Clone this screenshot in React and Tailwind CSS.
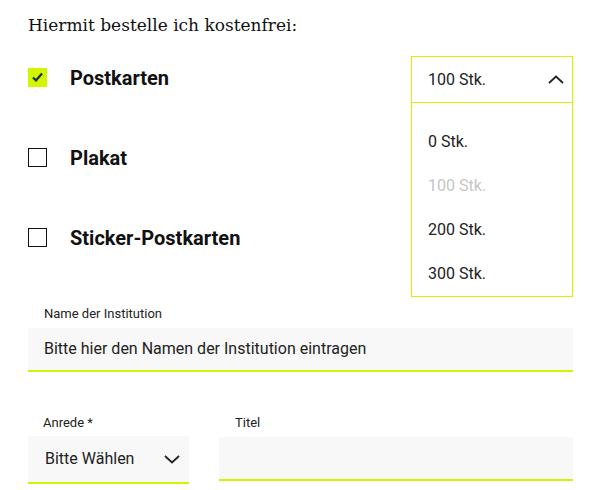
export default function App() {
  const lime = "border-[#d2f500]";
  return (
    <div className="w-[607px] min-h-[490px] bg-white pl-[28px] pr-[34px] pt-[13px] font-['Roboto',sans-serif] text-[#1c1c1c]">
      <h1 className="font-['DejaVu_Serif',serif] text-[17px] leading-[25px] font-normal text-[#111]">
        Hiermit bestelle ich kostenfrei:
      </h1>

      <div className="mt-[18px]">
        <div className="flex h-[80px] items-start justify-between">
          <label className="mt-[12px] flex h-[19px] items-center gap-[23px]">
            <span className="flex h-[19px] w-[19px] items-center justify-center bg-[#d2f500]">
              <svg width="19" height="19" viewBox="0 0 19 19">
                <polyline points="5,9.5 8,12.5 14,5.5" fill="none" stroke="#1b2a52" strokeWidth="2.2" />
              </svg>
            </span>
            <span className="pt-[1px] text-[20px] font-bold leading-[19px] text-[#111]">Postkarten</span>
          </label>

          <div className="relative w-[162px]">
            <div className={`flex h-[47px] items-center justify-between border ${lime} pl-[16px] pr-[8px] text-[16px] text-[#222]`}>
              <span>100 Stk.</span>
              <svg width="16" height="9" viewBox="0 0 16 9">
                <polyline points="1,8 8,1.5 15,8" fill="none" stroke="#222" strokeWidth="1.8" />
              </svg>
            </div>
            <ul className={`absolute left-0 top-full w-full border-x border-b ${lime} bg-white pt-[17px] pb-0 text-[16px]`}>
              <li className="flex h-[44px] items-center pl-[16px] text-[#222]">0 Stk.</li>
              <li className="flex h-[44px] items-center pl-[16px] text-[#c6c6c6]">100 Stk.</li>
              <li className="flex h-[44px] items-center pl-[16px] text-[#222]">200 Stk.</li>
              <li className="flex h-[44px] items-center pl-[16px] text-[#222]">300 Stk.</li>
            </ul>
          </div>
        </div>

        <div className="flex h-[80px] items-start">
          <label className="mt-[12px] flex h-[19px] items-center gap-[23px]">
            <span className="h-[19px] w-[19px] border border-[#111] bg-white" />
            <span className="pt-[1px] text-[20px] font-bold leading-[19px] text-[#111]">Plakat</span>
          </label>
        </div>

        <div className="flex h-[80px] items-start">
          <label className="mt-[12px] flex h-[19px] items-center gap-[23px]">
            <span className="h-[19px] w-[19px] border border-[#111] bg-white" />
            <span className="pt-[1px] text-[20px] font-bold leading-[19px] text-[#111]">Sticker-Postkarten</span>
          </label>
        </div>
      </div>

      <div className="pt-[10px]">
        <div className="pl-[16px] text-[13px] leading-[16px] text-[#222]">Name der Institution</div>
        <div className={`mt-[6px] flex h-[44px] items-center border-b-2 ${lime} bg-[#f8f8f8] px-[16px] text-[16px] text-[#222]`}>
          Bitte hier den Namen der Institution eintragen
        </div>
      </div>

      <div className="mt-[43px] flex gap-[30px]">
        <div className="w-[161px]">
          <div className="pl-[15px] text-[13px] leading-[16px] text-[#222]">Anrede *</div>
          <div className={`mt-[5px] flex h-[48px] items-center justify-between border-b-2 ${lime} bg-[#f8f8f8] pl-[17px] pr-[9px] text-[16px] text-[#222]`}>
            <span>Bitte Wählen</span>
            <svg width="16" height="9" viewBox="0 0 16 9">
              <polyline points="1,1 8,7.5 15,1" fill="none" stroke="#222" strokeWidth="1.8" />
            </svg>
          </div>
        </div>
        <div className="flex-1">
          <div className="pl-[16px] text-[13px] leading-[16px] text-[#222]">Titel</div>
          <div className={`mt-[6px] h-[44px] border-b-2 ${lime} bg-[#f8f8f8]`} />
        </div>
      </div>
    </div>
  );
}
